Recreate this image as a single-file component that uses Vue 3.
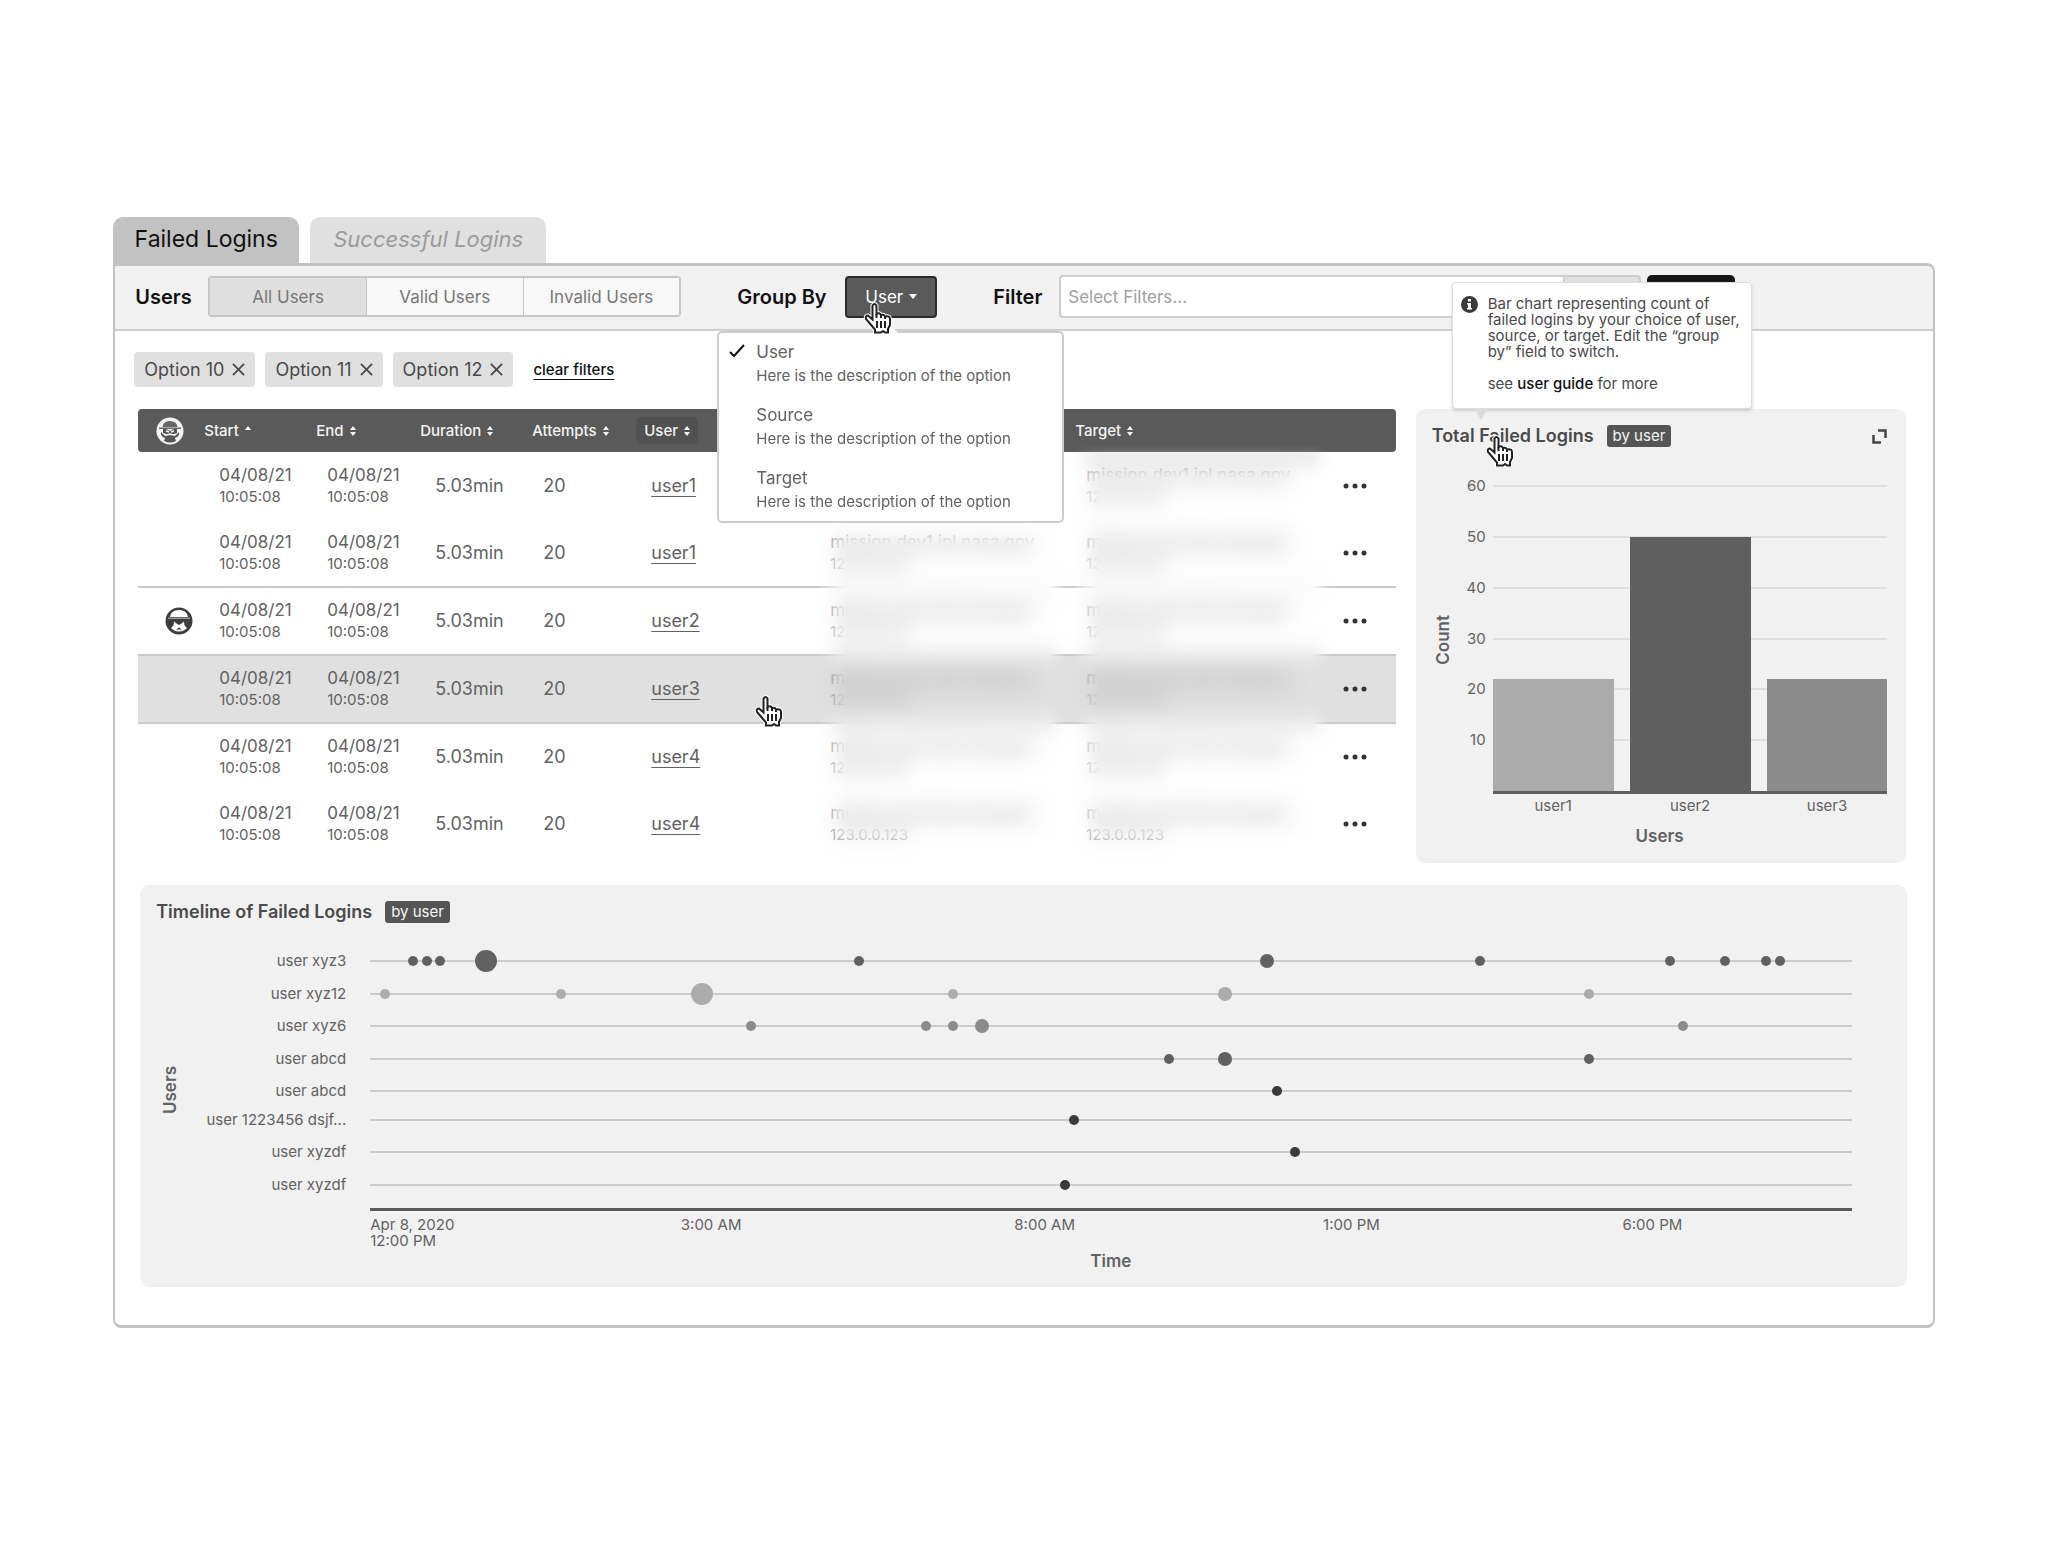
<script setup>
const rows = [
  { user: 'user1' },
  { user: 'user1' },
  { user: 'user2', top: true, flagged: true },
  { user: 'user3', top: true, active: true },
  { user: 'user4', top: true },
  { user: 'user4' },
]
const heads = ['Start', 'End', 'Duration', 'Attempts', 'User', 'Source', 'Target']
const options = ['User', 'Source', 'Target']
const chips = ['Option 10', 'Option 11', 'Option 12']
const ticks = [60, 50, 40, 30, 20, 10]
const bars = [
  { name: 'user1', count: 22, color: '#ababab' },
  { name: 'user2', count: 50, color: '#5f5f5f' },
  { name: 'user3', count: 22, color: '#8b8b8b' },
]
// Each event is [position along the axis in percent, size class]
const lanes = [
  { name: 'user xyz3', color: '#616161', events: [[2.9, 's'], [3.8, 's'], [4.7, 's'], [7.8, 'l'], [33, 's'], [60.5, 'm'], [74.9, 's'], [87.7, 's'], [91.4, 's'], [94.2, 's'], [95.1, 's']] },
  { name: 'user xyz12', color: '#acacac', events: [[1, 's'], [12.9, 's'], [22.4, 'l'], [39.3, 's'], [57.7, 'm'], [82.2, 's']] },
  { name: 'user xyz6', color: '#8b8b8b', events: [[25.7, 's'], [37.5, 's'], [39.3, 's'], [41.3, 'm'], [88.6, 's']] },
  { name: 'user abcd', color: '#616161', events: [[53.9, 's'], [57.7, 'm'], [82.2, 's']] },
  { name: 'user abcd', color: '#3a3a3a', events: [[61.2, 's']] },
  { name: 'user 1223456 dsjf...', color: '#3a3a3a', events: [[47.5, 's']] },
  { name: 'user xyzdf', color: '#3a3a3a', events: [[62.4, 's']] },
  { name: 'user xyzdf', color: '#3a3a3a', events: [[46.9, 's']] },
]
const times = [
  { label: '3:00 AM', at: 23 },
  { label: '8:00 AM', at: 45.5 },
  { label: '1:00 PM', at: 66.2 },
  { label: '6:00 PM', at: 86.5 },
]
</script>

<template>
  <svg class="defs" aria-hidden="true">
    <symbol id="hand" viewBox="0 0 30 32">
      <path d="M9.500 15.500V3.500q2-3 4 0v8.500q3-2 4.500 1 3-1 4 1.500 5-1 5 2.500v6l-2 4v3.500h-3l-2-1.500-2 1.500h-6v-3l-3-3.500-6-7q-1-3.500 2-3.500l4.500 4z" fill="#fff" stroke="#fff" stroke-width="4" />
      <path d="M9.500 15.500V3.500q2-3 4 0v8.500q3-2 4.500 1 3-1 4 1.500 5-1 5 2.500v6l-2 4v3.500h-3l-2-1.500-2 1.500h-6v-3l-3-3.500-6-7q-1-3.500 2-3.500l4.500 4z" fill="#fff" stroke="#222" stroke-width="2" />
      <path d="M14 19v7M18 19v7M22 19v7M13.500 12v4M18 13v3M22 15v2" stroke="#222" stroke-width="2" />
    </symbol>
  </svg>
  <main class="page">
    <nav class="tabs">
      <button class="tab current">Failed Logins</button>
      <button class="tab">Successful Logins</button>
    </nav>
    <section class="panel">
      <header class="toolbar">
        <span id="users-label" class="label users">Users</span>
        <div class="segments" role="group" aria-labelledby="users-label">
          <button class="on">All Users</button>
          <button>Valid Users</button>
          <button>Invalid Users</button>
        </div>
        <span class="label group">Group By</span>
        <div class="dropdown">
          <button class="trigger" aria-haspopup="true" aria-expanded="true">
            User
            <svg width="8" height="5" viewBox="0 0 8 5"><path d="M0 0h8L4 5z" fill="#fff" /></svg>
          </button>
          <svg class="cursor over-trigger"><use href="#hand" /></svg>
          <ul class="menu">
            <li v-for="(o, i) in options" :key="o">
              <button>
                <svg v-if="i === 0" class="check" width="16" height="14" viewBox="0 0 16 14"><path d="M1 8l4 4L15 1" fill="none" stroke="#111" stroke-width="2" /></svg>
                <span class="name">{{ o }}</span>
                <span class="desc">Here is the description of the option</span>
              </button>
            </li>
          </ul>
        </div>
        <label class="label filter" for="filters">Filter</label>
        <input id="filters" type="text" placeholder="Select Filters...">
        <button class="addon" aria-label="Add filter"></button>
        <button class="apply" aria-label="Apply"></button>
      </header>

      <div class="body">
        <div class="chips">
          <span v-for="c in chips" :key="c" class="chip">
            {{ c }}
            <button :aria-label="'Remove ' + c"><svg width="13" height="13" viewBox="0 0 14 14"><path d="M1 1l12 12M13 1L1 13" stroke="#4a4a4a" stroke-width="2" /></svg></button>
          </span>
          <a href="#" class="clear">clear filters</a>
        </div>

        <div class="columns">
          <div class="table-wrap">
            <table>
              <colgroup>
                <col class="c-icon"><col class="c-data"><col class="c-data"><col class="c-data"><col class="c-data"><col class="c-user"><col class="c-host"><col class="c-host"><col class="c-more">
              </colgroup>
              <thead>
                <tr>
                  <th class="icon">
                    <svg width="28" height="28" viewBox="0 0 28 28">
                      <circle cx="14" cy="14" r="13.500" fill="#f4f4f4" />
                      <path d="M6.500 10Q7 4 14 4t7.500 6zM3 10.500h22v1.500H3z" fill="#666" />
                      <path d="M7 12h3l4 2 4-2h3v4l-3 1h-2l-2-1-2 1h-2l-3-1z" fill="#555" />
                      <path d="M10 14l3 1M18 14l-3 1" stroke="#f4f4f4" stroke-width="1.500" />
                      <path d="M5 15l4 4 5-1 5 1 4-4q1 4-4 6l1 3q-6 3-12 0l1-3q-5-2-4-6z" fill="#555" />
                    </svg>
                  </th>
                  <th v-for="h in heads" :key="h" :class="h.toLowerCase()">
                    <button>
                      {{ h }}
                      <svg width="6" height="10" viewBox="0 0 6 10"><path d="M0 4l3-4 3 4z" fill="#fff" /><path v-if="h !== 'Start'" d="M0 6l3 4 3-4z" fill="#fff" /></svg>
                    </button>
                  </th>
                  <th></th>
                </tr>
              </thead>
              <tbody>
                <tr v-for="(r, i) in rows" :key="i" :class="{ top: r.top, active: r.active }">
                  <td class="flag">
                    <svg v-if="r.flagged" width="28" height="28" viewBox="0 0 28 28">
                      <circle cx="14" cy="14" r="13.500" fill="#3d3d3d" />
                      <path d="M5 10q1-7 9-7t9 7z" fill="#fff" />
                      <path d="M3 10.500h22V12H3z" fill="#999" />
                      <path d="M9 14.500l2.500 2L14 18l2.500-1.500 2.500-2 .5 4 2.500 2.500q-3.500 3.500-8 3.500T6 21l2.500-2.500z" fill="#fff" />
                      <path d="M14 20.500l3 2h-6z" fill="#3d3d3d" />
                    </svg>
                  </td>
                  <td v-for="n in 2" :key="n"><span class="date">04/08/21</span><span class="time">10:05:08</span></td>
                  <td>5.03min</td>
                  <td>20</td>
                  <td><a href="#">{{ r.user }}</a></td>
                  <td v-for="n in 2" :key="'h' + n" class="host"><span class="date">mission.dev1.jpl.nasa.gov</span><span class="time">123.0.0.123</span></td>
                  <td class="more">
                    <button aria-label="More"><svg width="24" height="6" viewBox="0 0 24 6"><circle cx="3" cy="3" r="2.500" /><circle cx="12" cy="3" r="2.500" /><circle cx="21" cy="3" r="2.500" /></svg></button>
                  </td>
                </tr>
              </tbody>
            </table>
            <div class="redact source"></div>
            <div class="redact target"></div>
            <svg class="cursor over-row"><use href="#hand" /></svg>
          </div>

          <section class="card totals">
            <header>
              <h2>Total Failed Logins</h2>
              <span class="badge">by user</span>
              <button class="expand" aria-label="Expand"><svg width="15" height="15" viewBox="0 0 15 15"><path d="M6 1.500h7.500V9M1.500 6v7.500H9" fill="none" stroke="#444" stroke-width="2.500" /></svg></button>
            </header>
            <div class="chart">
              <div class="y-title"><span>Count</span></div>
              <div class="plot">
                <div v-for="t in ticks" :key="t" class="grid-line" :style="{ bottom: t / 60 * 100 + '%' }"><span>{{ t }}</span></div>
                <div v-for="b in bars" :key="b.name" class="bar" :style="{ height: b.count / 60 * 100 + '%', background: b.color }"></div>
              </div>
            </div>
            <div class="bar-names"><span v-for="b in bars" :key="b.name">{{ b.name }}</span></div>
            <div class="x-title">Users</div>
            <aside class="tooltip" role="tooltip">
              <svg width="17" height="17" viewBox="0 0 17 17"><circle cx="8.500" cy="8.500" r="8.500" fill="#3a3a3a" /><path d="M7 3h3v2.500H7zM6 7h4v5h1v1.500H6V12h1V8.500H6z" fill="#fff" /></svg>
              <div>
                <p>Bar chart representing count of failed logins by your choice of user, source, or target. Edit the “group by” field to switch.</p>
                <p>see <a href="#">user guide</a> for more</p>
              </div>
            </aside>
            <svg class="cursor over-title"><use href="#hand" /></svg>
          </section>
        </div>

        <section class="card timeline">
          <header>
            <h2>Timeline of Failed Logins</h2>
            <span class="badge">by user</span>
          </header>
          <div class="time-chart">
            <div class="y-title"><span>Users</span></div>
            <div class="lanes">
              <div v-for="(l, i) in lanes" :key="i" class="lane">
                <span class="who">{{ l.name }}</span>
                <div class="track">
                  <i v-for="e in l.events" :key="e[0]" :class="e[1]" :style="{ left: e[0] + '%', background: l.color }"></i>
                </div>
              </div>
            </div>
          </div>
          <div class="axis">
            <span class="origin">Apr 8, 2020<br>12:00 PM</span>
            <span v-for="t in times" :key="t.label" class="tick" :style="{ left: t.at + '%' }">{{ t.label }}</span>
          </div>
          <div class="x-title">Time</div>
        </section>
      </div>
    </section>
  </main>
</template>

<style>
body { margin: 0; background: #fff; }
</style>

<style scoped>
.page {
  box-sizing: border-box;
  min-width: 1500px;
  padding: 217px 6% 216px 5.5%;
  font: 15px/20px Inter, "Liberation Sans", sans-serif;
  color: #626262;
}
.page * { box-sizing: border-box; }
.defs { position: absolute; width: 0; height: 0; }
button { margin: 0; padding: 0; border: 0; background: none; font: inherit; color: inherit; cursor: pointer; }
svg { display: block; flex: none; }
.tabs { display: flex; gap: 11px; }
.tab {
  width: 236px; height: 46px; padding-bottom: 2px; border-radius: 10px 10px 0 0;
  background: #e0e0e0; color: #9b9b9b; font-size: 22px; font-style: italic;
}
.tab.current { width: 186px; background: #c2c2c2; color: #111; font-size: 23px; font-style: normal; }
.panel { border: 2px solid #c3c3c3; border-width: 3px 2px; border-radius: 0 8px 8px 8px; padding-bottom: 38px; }
.toolbar {
  display: flex; align-items: center; height: 65px; padding: 0 198px 2px 20px;
  background: #f1f1f1; border-bottom: 2px solid #cfcfcf; border-radius: 0 6px 0 0;
}
.label { color: #111; font-size: 20px; font-weight: 600; white-space: nowrap; }
.users { width: 73px; }
.group { width: 108px; margin-left: 56px; }
.filter { width: 66px; margin-left: 56px; }
.segments { display: flex; width: 473px; height: 41px; border: 2px solid #c6c6c6; border-radius: 4px; }
.segments button { flex: 1; background: #f8f8f8; color: #777; font-size: 17px; }
.segments button + button { border-left: 1px solid #c6c6c6; }
.segments .on { background: #dfdfdf; }
.dropdown { position: relative; }
.trigger {
  display: flex; align-items: center; justify-content: center; gap: 6px; width: 92px; height: 42px;
  border: 2px solid #2b2b2b; border-radius: 4px; background: #5a5a5a; color: #fff; font-size: 17px;
}
.menu {
  position: absolute; z-index: 3; top: 55px; left: -128px; width: 347px; height: 192px; margin: 0; padding: 7px 0 0;
  list-style: none; background: #fff; border: 2px solid #cdcdcd; border-radius: 5px;
}
.menu::before {
  content: ""; position: absolute; top: -8px; left: 163px;
  border: 8px solid transparent; border-top: 0; border-bottom-color: #fff;
}
.menu li { height: 63px; }
.menu button { position: relative; display: block; width: 100%; padding-left: 37px; text-align: left; }
.menu span { display: block; height: 24px; line-height: 24px; }
.menu .name { font-size: 17px; }
.menu .desc { font-size: 15px; }
.check { position: absolute; left: 10px; top: 4px; }
input {
  flex: 1; min-width: 0; height: 43px; padding: 0 7px; border: 2px solid #cdcdcd; border-radius: 4px 0 0 4px;
  background: #fff; font: 17px/20px Inter, "Liberation Sans", sans-serif;
}
input::placeholder { color: #a0a0a0; opacity: 1; }
.addon { width: 76px; height: 43px; border: 2px solid #cdcdcd; border-left: 0; border-radius: 0 4px 4px 0; background: #e0e0e0; }
.apply { width: 88px; height: 43px; margin-left: 6px; border-radius: 5px; background: #151515; }

.body { padding: 21px 26px 0 19px; }
.chips { display: flex; align-items: center; gap: 10px; height: 35px; }
.chip {
  display: flex; align-items: center; gap: 8px; height: 35px; padding: 0 10px;
  border-radius: 4px; background: #e0e0e0; color: #4a4a4a; font-size: 18px;
}
.clear { margin-left: 10px; color: #111; font-weight: 500; text-underline-offset: 4px; }
.columns { display: grid; grid-template-columns: 1258fr 491fr; gap: 20px; margin: 22px 1px 22px 4px; }
.table-wrap { position: relative; padding-bottom: 6px; }
table { width: 100%; table-layout: fixed; border-collapse: separate; border-spacing: 0; }
.c-icon { width: 66px; }
.c-data { width: 108px; }
.c-user { width: 179px; }
.c-host { width: 256px; }
th { height: 43px; padding: 0 0 0 4px; background: #5a5a5a; color: #f4f4f4; font-weight: 500; text-align: left; }
th button { display: flex; align-items: center; gap: 6px; }
th.icon { padding-left: 18px; border-radius: 4px 0 0 4px; }
th:last-child { border-radius: 0 4px 4px 0; }
th.start, th.duration, th.user { padding-left: 0; }
th.user button { height: 27px; padding: 0 8px; border-radius: 5px; background: #515151; }
td { height: 67px; padding: 0 0 0 15px; font-size: 18px; white-space: nowrap; }
.top td { height: 68px; }
td a { color: inherit; text-underline-offset: 4px; }
.date, .time { display: block; height: 22px; line-height: 22px; }
.date { font-size: 17px; }
.time { font-size: 15px; }
td.host { color: #8a8a8a; }
td.flag { padding-left: 27px; }
td.more { padding-left: 16px; }
.more button { display: block; }
.more svg { fill: #333; }
.top td { border-top: 2px solid #c9c9c9; }
.active td { background: #e0e0e0; }
.redact {
  position: absolute; top: 34px; bottom: 0; width: 20%;
  backdrop-filter: blur(12px);
  -webkit-mask: linear-gradient(90deg, transparent, rgb(0 0 0 / 75%) 20px, #000 32px, #000 92%, transparent), linear-gradient(transparent, #000 36px, #000 calc(100% - 40px), transparent);
  -webkit-mask-composite: source-in;
  mask-composite: intersect;
}
.redact.source { left: 54%; top: 101px; }
.redact.target { left: 74%; width: 21%; }
.cursor { position: absolute; z-index: 4; width: 30px; height: 32px; pointer-events: none; }
.over-trigger { left: 18px; top: 26px; }
.over-row { left: 49%; top: 286px; }
.over-title { left: 69px; top: 26px; }

.card { position: relative; border-radius: 9px; background: #f1f1f1; }
.card header { display: flex; align-items: center; }
h2 { margin: 0; color: #4a4a4a; font-size: 18px; line-height: 22px; font-weight: 600; }
.badge { margin-left: 13px; padding: 0 6px; border-radius: 3px; background: #555; color: #f4f4f4; line-height: 22px; }
.totals { padding: 16px 19px 0 16px; }
.expand { margin-left: auto; }
.chart { display: flex; height: 308px; margin-top: 39px; }
.y-title { display: flex; align-items: center; justify-content: center; width: 22px; font-size: 17px; font-weight: 600; }
.y-title span { writing-mode: vertical-rl; transform: rotate(180deg); }
.plot { position: relative; flex: 1; display: flex; align-items: flex-end; gap: 16px; margin-left: 39px; border-bottom: 3px solid #5f5f5f; }
.grid-line { position: absolute; left: 0; right: 0; height: 2px; margin-bottom: -1px; background: #dedede; }
.grid-line span { position: absolute; right: 100%; top: -9px; padding-right: 7px; }
.bar { position: relative; flex: 1; }
.bar-names { display: flex; gap: 16px; margin: 2px 0 10px 61px; text-align: center; }
.bar-names span { flex: 1; }
.x-title { text-align: center; font-size: 17px; font-weight: 600; }
.tooltip {
  position: absolute; z-index: 3; left: 36px; bottom: 100%; display: flex; gap: 10px; width: 300px; height: 127px;
  padding: 13px 10px 0 8px; border-radius: 4px; background: #fff; border: 1px solid #ddd; box-shadow: 0 2px 3px #ccc;
  color: #4a4a4a;
}
.tooltip::after {
  content: ""; position: absolute; top: 100%; left: 21px;
  border: 7px solid transparent; border-bottom: 0; border-top: 12px solid #dcdcdc;
}
.tooltip p { margin: 0 0 16px; line-height: 16px; white-space: normal; }
.tooltip a { color: #111; font-weight: 500; text-decoration: none; }

.timeline { height: 402px; margin-left: 6px; padding: 16px 55px 0 16px; }
.time-chart { display: flex; margin-top: 22px; }
.time-chart .y-title { width: 28px; padding-top: 34px; }
.lanes { flex: 1; display: flex; flex-direction: column; height: 256px; }
.lane { display: flex; align-items: center; flex: 1; }
.lane:nth-child(6) { margin-top: -4px; }
.who { width: 162px; text-align: right; }
.track { position: relative; flex: 1; height: 2px; margin-left: 24px; background: #cbcbcb; }
.track i { position: absolute; top: 1px; width: 10px; height: 10px; border-radius: 50%; transform: translate(-50%, -50%); }
.track .m { width: 14px; height: 14px; }
.track .l { width: 22px; height: 22px; }
.axis { position: relative; height: 43px; margin: 7px 0 0 214px; padding-top: 6px; border-top: 3px solid #5a5a5a; line-height: 16px; }
.origin { display: block; }
.tick { position: absolute; top: 6px; transform: translateX(-50%); }
.timeline .x-title { margin: 0 0 0 213px; }
</style>
